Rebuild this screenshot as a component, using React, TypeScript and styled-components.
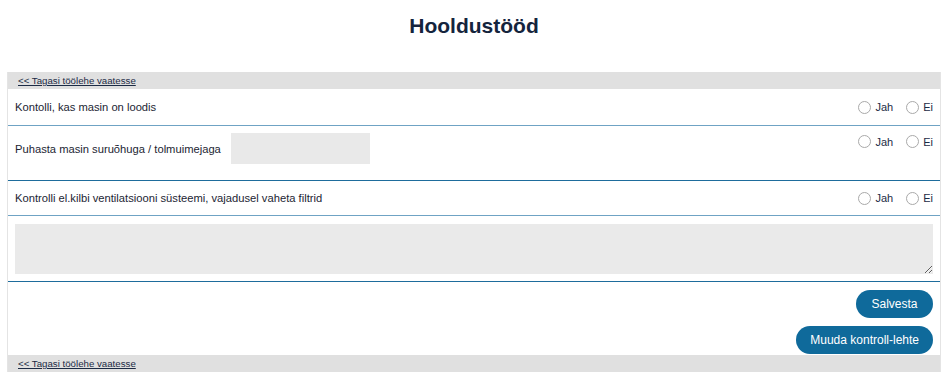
import React from "react";
import styled, { createGlobalStyle } from "styled-components";

const Global = createGlobalStyle`
  html, body { margin: 0; padding: 0; background: #fff; }
  body { font-family: "Liberation Sans", Arial, sans-serif; color: #1c2533; }
`;

const Page = styled.div`
  padding: 0 3px 0 7px;
`;

const Title = styled.h1`
  margin: 0;
  height: 72px;
  padding-top: 14px;
  box-sizing: border-box;
  text-align: center;
  font-size: 21px;
  font-weight: bold;
  color: #14243d;
`;

const Panel = styled.div`
  border-left: 1px solid #e4e4e4;
  border-right: 1px solid #e4e4e4;
`;

const NavBar = styled.div`
  background: #e0e0e0;
  height: 17px;
  display: flex;
  align-items: center;
  padding: 0 10px;
`;

const BackLink = styled.a`
  font-size: 9.7px;
  color: #1c2b45;
  text-decoration: underline;
  cursor: pointer;
`;

const Row = styled.div<{ $h: number; $top?: boolean; $soft?: boolean }>`
  display: flex;
  align-items: ${(p) => (p.$top ? "flex-start" : "center")};
  justify-content: space-between;
  min-height: ${(p) => p.$h}px;
  box-sizing: border-box;
  padding: ${(p) => (p.$top ? "7px 7px 16px 7px" : "0 7px")};
  border-bottom: 1px solid ${(p) => (p.$soft ? "#6fa3c4" : "#1e6c9c")};
`;

const Question = styled.div`
  display: flex;
  align-items: center;
  gap: 10px;
  font-size: 11.2px;
  color: #1c2533;
`;

const SmallInput = styled.div`
  width: 139px;
  height: 31px;
  background: #e9e9e9;
`;

const Radios = styled.div<{ $offset?: number }>`
  display: flex;
  align-items: center;
  gap: 13px;
  margin-top: ${(p) => p.$offset ?? 0}px;
`;

const RadioLabel = styled.label`
  display: flex;
  align-items: center;
  gap: 4px;
  font-size: 11px;
  color: #1c2b45;
`;

const Circle = styled.span`
  width: 11px;
  height: 11px;
  border-radius: 50%;
  border: 1px solid #a9a9a9;
  background: #fff;
  display: inline-block;
`;

const NoteRow = styled.div`
  padding: 8px 7px 7px 7px;
  border-bottom: 1px solid #1e6c9c;
`;

const NoteArea = styled.textarea`
  display: block;
  width: 100%;
  height: 50px;
  box-sizing: border-box;
  background: #eaeaea;
  border: none;
  outline: none;
  resize: vertical;
`;

const Actions = styled.div`
  display: flex;
  flex-direction: column;
  align-items: flex-end;
  gap: 8px;
  padding: 8px 7px 1px 7px;
`;

const Button = styled.button`
  height: 28px;
  padding: 0 14px;
  border: none;
  border-radius: 14px;
  background: #0f6a9b;
  color: #fff;
  font-family: "Liberation Sans", Arial, sans-serif;
  font-size: 12px;
  font-weight: 500;
  cursor: pointer;
`;

const YesNo = ({ offset }: { offset?: number }) => (
  <Radios $offset={offset}>
    <RadioLabel>
      <Circle />
      Jah
    </RadioLabel>
    <RadioLabel>
      <Circle />
      Ei
    </RadioLabel>
  </Radios>
);

export default function App() {
  return (
    <>
      <Global />
      <Page>
        <Title>Hooldustööd</Title>
        <Panel>
          <NavBar>
            <BackLink>&lt;&lt; Tagasi töölehe vaatesse</BackLink>
          </NavBar>
          <Row $h={37} $soft>
            <Question>Kontolli, kas masin on loodis</Question>
            <YesNo />
          </Row>
          <Row $h={55} $top>
            <Question>
              Puhasta masin suruõhuga / tolmuimejaga
              <SmallInput />
            </Question>
            <YesNo offset={2} />
          </Row>
          <Row $h={35} $soft>
            <Question>Kontrolli el.kilbi ventilatsiooni süsteemi, vajadusel vaheta filtrid</Question>
            <YesNo />
          </Row>
          <NoteRow>
            <NoteArea />
          </NoteRow>
          <Actions>
            <Button style={{ width: 77 }}>Salvesta</Button>
            <Button>Muuda kontroll-lehte</Button>
          </Actions>
          <NavBar>
            <BackLink>&lt;&lt; Tagasi töölehe vaatesse</BackLink>
          </NavBar>
        </Panel>
      </Page>
    </>
  );
}
